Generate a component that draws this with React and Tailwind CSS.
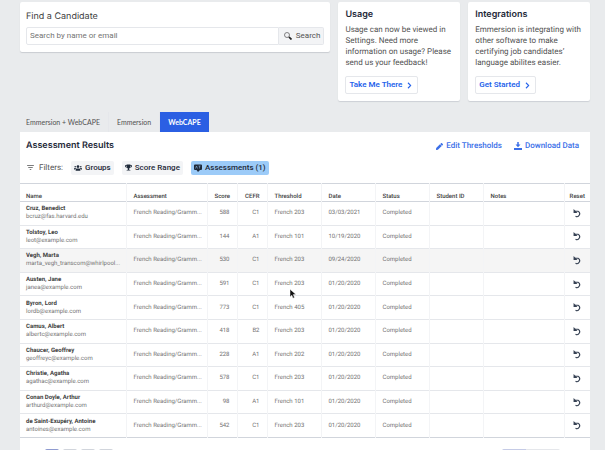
import React, { useState } from 'react';
import { FaPen, FaTrophy, FaUsers, FaChevronRight } from 'react-icons/fa';
import { MdFilterList } from 'react-icons/md';

const tabs = ['Emmersion + WebCAPE', 'Emmersion', 'WebCAPE'];

const candidates = [
  { name: 'Cruz, Benedict', email: 'bcruz@fas.harvard.edu', score: 588, cefr: 'C1', threshold: 'French 203', date: '03/03/2021' },
  { name: 'Tolstoy, Leo', email: 'leot@example.com', score: 144, cefr: 'A1', threshold: 'French 101', date: '10/19/2020' },
  { name: 'Vegh, Marta', email: 'marta_vegh_transcom@whirlpool...', score: 530, cefr: 'C1', threshold: 'French 203', date: '09/24/2020', active: true },
  { name: 'Austen, Jane', email: 'janea@example.com', score: 591, cefr: 'C1', threshold: 'French 203', date: '01/20/2020' },
  { name: 'Byron, Lord', email: 'lordb@example.com', score: 773, cefr: 'C1', threshold: 'French 405', date: '01/20/2020' },
  { name: 'Camus, Albert', email: 'albertc@example.com', score: 418, cefr: 'B2', threshold: 'French 203', date: '01/20/2020' },
  { name: 'Chaucer, Geoffrey', email: 'geoffreyc@example.com', score: 228, cefr: 'A1', threshold: 'French 202', date: '01/20/2020' },
  { name: 'Christie, Agatha', email: 'agathac@example.com', score: 578, cefr: 'C1', threshold: 'French 203', date: '01/20/2020' },
  { name: 'Conan Doyle, Arthur', email: 'arthurd@example.com', score: 98, cefr: 'A1', threshold: 'French 101', date: '01/20/2020' },
  { name: 'de Saint-Exupéry, Antoine', email: 'antoines@example.com', score: 542, cefr: 'C1', threshold: 'French 203', date: '01/20/2020' },
];

const SearchIcon = () => (
  <svg viewBox="0 0 16 16" className="h-2 w-2" fill="none" stroke="currentColor">
    <circle cx="6" cy="6" r="5" strokeWidth="1.4" />
    <path d="M10 10l5 5" strokeWidth="3.5" stroke="#222" />
  </svg>
);

const ResetIcon = () => (
  <svg viewBox="0 0 16 16" className="h-[9px] w-[9px]" fill="none" stroke="currentColor">
    <path d="M3 4h6a5 5 0 1 1-4.500 9" strokeWidth="2" />
    <path d="M1 0v7h7z" fill="currentColor" stroke="none" />
  </svg>
);

const DownloadIcon = () => (
  <svg viewBox="0 0 16 16" className="h-2 w-2" fill="currentColor">
    <path d="M6.5 0h3v5H13l-5 5.500L3 5h3.500zM0 12h16v4H0z" />
  </svg>
);

const AssessmentIcon = () => (
  <svg viewBox="0 0 16 16" className="h-2 w-2" fill="currentColor">
    <path d="M2 1h12a2 2 0 0 1 2 2v7a2 2 0 0 1-2 2h-2l-4 4-3-4H2a2 2 0 0 1-2-2V3a2 2 0 0 1 2-2z" />
    <path d="M3 9l2-5 2 5M9 4h4M11 4v5" fill="none" stroke="#9ccbf8" strokeWidth="1" />
  </svg>
);

const PromoCard = ({ title, text, action }) => (
  <section className="rounded-xs bg-white px-[7px] pt-2 pb-[7px] shadow-[0_1px_1px_#cdd0d5]">
    <h2 className="font-['Inter',sans-serif] text-[9px] leading-[10px] font-semibold">{title}</h2>
    <p className="mt-1 text-[8px] leading-[11px] text-neutral-600">{text}</p>
    <button
      type="button"
      className="mt-2 flex h-[18px] items-center gap-1 rounded-xs border border-gray-200 pr-1 pl-[3px] text-[8px] font-semibold text-[#2563eb]"
    >
      {action}
      <FaChevronRight className="h-[7px] w-[7px]" />
    </button>
  </section>
);

const App = () => {
  const [activeTab, setActiveTab] = useState('WebCAPE');
  const [query, setQuery] = useState('');

  return (
    <div className="h-screen overflow-hidden bg-[#e9ebed] pt-[2px] pr-[15px] pl-5 font-['Roboto',sans-serif] text-gray-800 [text-rendering:geometricPrecision]">
      {/* Search and promos */}
      <div className="grid grid-cols-[minmax(0,311fr)_minmax(0,122fr)_minmax(0,122fr)] items-start gap-2">
        <section className="rounded-xs bg-white px-[6px] pt-2 pb-[7px] shadow-[0_1px_1px_#c9ccd1]">
          <label htmlFor="search" className="mt-px block font-['Inter',sans-serif] text-[9px] leading-[12px] text-neutral-700">
            Find a Candidate
          </label>
          <div className="mt-1 flex h-[18px] text-[8px]">
            <input
              id="search"
              type="text"
              placeholder="Search by name or email"
              value={query}
              onChange={(e) => setQuery(e.target.value)}
              className="min-w-0 flex-1 rounded-l-xs border border-gray-200 px-[3px] placeholder:text-neutral-500"
            />
            <button
              type="button"
              className="flex items-center gap-1 rounded-r-xs border border-l-0 border-gray-200 bg-gray-100 pr-[3px] pl-[5px] text-neutral-600"
            >
              <SearchIcon />
              Search
            </button>
          </div>
        </section>
        <PromoCard
          title="Usage"
          text="Usage can now be viewed in Settings. Need more information on usage? Please send us your feedback!"
          action="Take Me There"
        />
        <PromoCard
          title="Integrations"
          text="Emmersion is integrating with other software to make certifying job candidates’ language abilites easier."
          action="Get Started"
        />
      </div>

      {/* Product tabs */}
      <nav className="mt-[11px] flex h-5 font-['Lato',sans-serif] text-[7px]">
        {tabs.map((tab) => (
          <button
            key={tab}
            type="button"
            onClick={() => setActiveTab(tab)}
            className={
              tab === activeTab
                ? 'bg-[#2b5fe3] px-2 font-bold text-white'
                : 'border-r border-gray-200 px-2 text-neutral-600 first:pl-[6px]'
            }
          >
            {tab}
          </button>
        ))}
      </nav>

      <main className="bg-white">
        <div className="flex items-center justify-between pt-2 pr-[11px] pl-[6px]">
          <h1 className="font-['Inter',sans-serif] text-[9px] leading-[12px] font-semibold text-gray-800">
            Assessment Results
          </h1>
          <div className="flex gap-3 text-[8px] leading-[12px] font-medium text-[#3b6fe8]">
            <a href="#thresholds" className="flex items-center gap-[3px]">
              <FaPen className="h-[7px] w-[7px]" />
              Edit Thresholds
            </a>
            <a href="#download" className="flex items-center gap-[3px]">
              <DownloadIcon />
              Download Data
            </a>
          </div>
        </div>

        {/* Filters */}
        <div className="flex h-[31px] items-center gap-2 px-[6px] text-[8px] font-medium">
          <span className="flex items-center gap-1 font-normal text-neutral-600">
            <MdFilterList className="h-[9px] w-[9px]" />
            Filters:
          </span>
          <button type="button" className="flex h-[14px] items-center gap-[3px] rounded-xs bg-gray-100 px-[3px]">
            <FaUsers className="h-2 w-2" />
            Groups
          </button>
          <button type="button" className="flex h-[14px] items-center gap-[3px] rounded-xs bg-gray-100 px-[3px]">
            <FaTrophy className="h-[7px] w-[7px]" />
            Score Range
          </button>
          <button type="button" className="flex h-[14px] items-center gap-[3px] rounded-xs bg-[#9ccbf8] px-[3px]">
            <AssessmentIcon />
            Assessments (1)
          </button>
        </div>

        {/* Results */}
        <table className="h-[255px] w-full table-fixed border-y border-gray-300 text-[6px] leading-[8px] text-neutral-500">
          <colgroup>
            <col className="w-[106px]" />
            <col />
            <col className="w-[30px]" />
            <col className="w-[30px]" />
            <col className="w-[54px]" />
            <col className="w-[54px]" />
            <col className="w-[54px]" />
            <col className="w-[54px]" />
            <col className="w-[81px]" />
            <col className="w-[26px]" />
          </colgroup>
          <thead className="text-left text-neutral-700">
            <tr className="h-[18px] border-b border-gray-300 align-bottom [&>th]:px-[7px] [&>th]:font-medium [&>th:first-child]:pl-[6px] [&>th+th]:border-l [&>th+th]:border-gray-100">
              <th>Name</th>
              <th>Assessment</th>
              <th className="text-right">Score</th>
              <th className="text-right">CEFR</th>
              <th>Threshold</th>
              <th>Date</th>
              <th>Status</th>
              <th>Student ID</th>
              <th>Notes</th>
              <th><span className="flex justify-center">Reset</span></th>
            </tr>
          </thead>
          <tbody>
            {candidates.map((c) => (
              <tr
                key={c.email}
                className={`border-b border-gray-200 last:border-0 [&>td]:px-[7px] [&>td:first-child]:pl-[6px] [&>td+td]:border-l [&>td+td]:border-gray-100 ${c.active ? 'bg-neutral-100' : ''}`}
              >
                <td>
                  <div className="whitespace-nowrap font-bold text-neutral-700">{c.name}</div>
                  <div className="whitespace-nowrap">{c.email}</div>
                </td>
                <td className="whitespace-nowrap">French Reading/Gramm...</td>
                <td className="text-right">{c.score}</td>
                <td className="text-right">{c.cefr}</td>
                <td>{c.threshold}</td>
                <td>{c.date}</td>
                <td>Completed</td>
                <td />
                <td />
                <td>
                  <button type="button" aria-label="Reset" className="mx-auto block text-gray-700">
                    <ResetIcon />
                  </button>
                </td>
              </tr>
            ))}
          </tbody>
        </table>

        {/* Pagination */}
        <div className="flex justify-between pt-[11px] pr-[30px] pl-[25px]">
          <div className="flex gap-1">
            <button type="button" aria-label="Page 1" className="h-4 w-[14px] rounded-xs bg-[#8f9bd0]" />
            <button type="button" aria-label="Page 2" className="h-4 w-[14px] rounded-xs bg-gray-300" />
            <button type="button" aria-label="Page 3" className="h-4 w-[14px] rounded-xs bg-gray-300" />
            <button type="button" aria-label="Next page" className="h-4 w-[14px] rounded-xs bg-gray-300" />
          </div>
          <div className="flex">
            <button type="button" aria-label="Fewer rows" className="h-4 w-6 rounded-l-xs bg-[#c5cbe6]" />
            <button type="button" aria-label="More rows" className="h-4 w-[34px] rounded-r-xs bg-gray-200" />
          </div>
        </div>
      </main>

      {/* Pointer */}
      <svg viewBox="0 0 10 16" className="pointer-events-none absolute top-[289px] left-[290px] h-[10px] w-[6px]">
        <path d="M0 0v13l3-3 2 5 2.500-1-2-5H10z" fill="#111" stroke="#fff" strokeWidth="0.800" />
      </svg>
    </div>
  );
};

export default App;
